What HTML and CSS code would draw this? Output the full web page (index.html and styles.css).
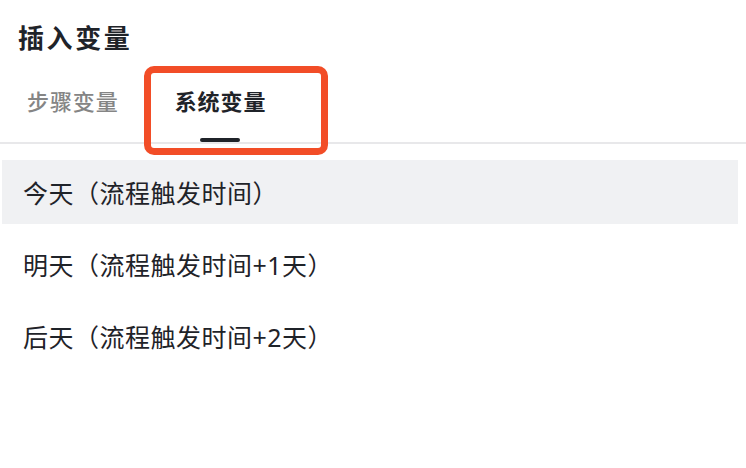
FILE: index.html
```html
<!DOCTYPE html>
<html lang="zh-CN">
<head>
<meta charset="utf-8">
<title>插入变量</title>
<link rel="stylesheet" href="styles.css">
</head>
<body>
<div class="panel">
  <h1 class="title">插入变量</h1>
  <div class="tabs">
    <div class="tab">
      <span class="tab-label">步骤变量</span>
    </div>
    <div class="tab tab-active">
      <span class="tab-label">系统变量</span>
      <span class="tab-ink"></span>
    </div>
  </div>
  <ul class="list">
    <li class="item item-hover">今天（流程触发时间）</li>
    <li class="item">明天（流程触发时间+1天）</li>
    <li class="item">后天（流程触发时间+2天）</li>
  </ul>
  <div class="callout"></div>
</div>
</body>
</html>
```
FILE: styles.css
```css
html, body {
  margin: 0;
  padding: 0;
  background: #ffffff;
}
body {
  font-family: "Noto Sans", "Noto Sans CJK SC", sans-serif;
  color: #1f2329;
}
.panel {
  position: relative;
  width: 746px;
  height: 468px;
  overflow: hidden;
}
.title {
  margin: 0;
  padding: 25px 0 0 18px;
  font-size: 26px;
  line-height: 26px;
  font-weight: 700;
  letter-spacing: 2.6px;
  color: #1f2329;
}
.tabs {
  display: flex;
  gap: 57px;
  margin-top: 39px;
  padding-left: 27px;
  border-bottom: 2px solid #e8e8ea;
}
.tab {
  display: flex;
  flex-direction: column;
  align-items: center;
  height: 52px;
}
.tab-label {
  font-size: 22px;
  line-height: 22px;
  letter-spacing: 0.9px;
  font-weight: 500;
  color: #858585;
  margin-right: -0.9px;
}
.tab-active .tab-label {
  font-weight: 700;
  color: #1f2329;
}
.tab-ink {
  display: block;
  width: 40px;
  height: 6px;
  margin-top: 26px;
  border-radius: 3px;
  background: #1f2329;
}
.list {
  list-style: none;
  margin: 0;
  padding: 16px 8px 0 2px;
  display: flex;
  flex-direction: column;
  gap: 8px;
}
.item {
  height: 64px;
  display: flex;
  align-items: center;
  padding-left: 21px;
  font-size: 25px;
  letter-spacing: 0.5px;
  color: #1f2329;
}
.item-hover {
  background: #f0f1f3;
}
.callout {
  position: absolute;
  left: 144px;
  top: 66px;
  width: 170px;
  height: 75px;
  border: 7px solid #f24d27;
  border-radius: 10px;
}
```
